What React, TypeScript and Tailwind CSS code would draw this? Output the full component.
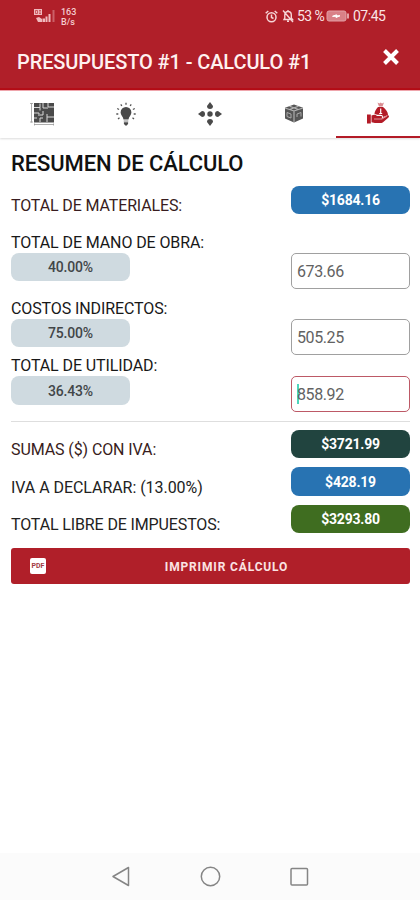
import React from 'react';
import clsx from 'clsx';

const INK = '#4a4a4a';

function PlanIcon() {
  return (
    <svg width="25" height="24" viewBox="0 0 25 24" fill={INK}>
      <path d="M4 1h20v19.500H4z" />
      <path
        d="M4 5.500h6v-4M10 5.500v3M13 1v5h5M18 1v4h6M4 11h5v3M13 9v4h-3M17 12v8M17 15h7M10 20v-4h3M4 16h3"
        fill="none"
        stroke="#d8d8d8"
        strokeWidth="1"
      />
      <path d="M1.500 1v19.500M0 1.500h3M0 20h3M4 22.500h20M4.500 21.500v2M23.500 21.500v2" fill="none" stroke="#999" strokeWidth=".8" />
    </svg>
  );
}

function BulbIcon() {
  return (
    <svg width="20" height="24" viewBox="0 0 20 24" fill={INK}>
      <path d="M10 5a5.400 5.400 0 0 0-5.400 5.400c0 2.800 2.600 4 2.900 7h5c.3-3 2.900-4.200 2.900-7A5.400 5.400 0 0 0 10 5z" />
      <path d="M7.700 18.300h4.600v1.500H7.700z" fill="#aaa" />
      <path d="M7.900 20.300h4.200v1.500L10.800 23.500H9.200l-1.300-1.700z" />
      <path
        d="M10 .8v2M4.800 2.300l1 1.700M15.200 2.300l-1 1.700M1.200 6.500l1.900 1M18.800 6.500l-1.900 1M.3 12h2M17.700 12h2M2 17l1.500-1.300M18 17l-1.500-1.300"
        fill="none"
        stroke="#555"
        strokeWidth="1.300"
      />
    </svg>
  );
}

function ArrowsIcon() {
  return (
    <svg width="24" height="24" viewBox="0 0 24 24" fill={INK}>
      <circle cx="12" cy="12" r="2.700" />
      {[0, 90, 180, 270].map((angle) => (
        <g key={angle} transform={`rotate(${angle} 12 12)`}>
          <path d="M12 0l3 4a2.800 2.800 0 1 1-6 0z" />
        </g>
      ))}
    </svg>
  );
}

function BoxIcon() {
  return (
    <svg width="20" height="19" viewBox="0 0 20 19">
      <path d="M10 .5l9 3.200v10.800l-9 4-9-4V3.700z" fill="#555" />
      <path d="M1 4l9 3 9-3M5.500 2.200l9 3.300M14.500 2.200l-9 3.300M10 7v11" fill="none" stroke="#b5b5b5" strokeWidth="1.100" />
      <path d="M3 8.500l4 1.500v4l-4-1.500zM13 13v-3l4-1.500v4" fill="none" stroke="#aaa" strokeWidth="1" />
    </svg>
  );
}

function MoneyHandIcon() {
  return (
    <svg width="23" height="23" viewBox="0 0 23 23" fill="#b31b27">
      <path d="M0 12.500h3.800v9H0z" />
      <path d="M4.500 13.500c2.500-1 4-1 5.500.5h4c1.500 0 1.500 2 0 2.200h-3.500 4.500l5-2.700c1.800-.7 2.700.8 1.500 1.900l-5.500 4.800c-1 .7-2 .9-3.500.9H8l-3.500-.8z" />
      <path d="M11 5h5c2.800 2.300 5 5 5 8l-5 2c0-1.500-1-2.200-2.500-2.200h-3L7.500 12C7.500 9 9.300 7 11 5z" />
      <path d="M10.500 .5l1.500 4h3.500l1.500-4-2 1-1.300-1-1.300 1z" fill="#d98c91" />
      <path d="M13.700 6.500v5.500M12.200 11.500h3" stroke="#fff" strokeWidth="1.200" fill="none" />
      <path d="M7 17h8l5-3" stroke="#f3c7ca" strokeWidth=".7" fill="none" />
    </svg>
  );
}

function StatusBar() {
  return (
    <div className="flex h-8 items-center pl-[34px] pr-[34px] text-[#f4cdcf]">
      <svg width="22" height="16" viewBox="0 0 22 16" fill="#f0b9bd">
        <path d="M0 1h8v6H0z" />
        <path d="M1.500 2.500h2v3h-2zM5 2.500h2M5 4h2M5 5.500h2" stroke="#b21e29" strokeWidth=".6" fill="none" />
        <path d="M2 10l3-1 3 2v3H4zM8.500 10.500h2.500V14H8.500zM11.500 8.500h2V14h-2zM14.500 6h2v8h-2z" />
        <path d="M18.500 2h2v12h-2z" fill="#cb6068" />
      </svg>
      <div className="ml-[5px] mt-[2px] w-[17px] text-[9px] font-medium leading-[10px]">
        <div>163</div>
        <div>B/s</div>
      </div>
      <div className="ml-auto flex items-center">
        <svg width="13" height="13" viewBox="0 0 13 13" fill="none" stroke="#f6d5d7" strokeWidth="1.500">
          <circle cx="6.500" cy="7.200" r="4.500" />
          <path d="M6.500 4.500v3l2 1M.7 3.300L3.300 1M12.300 3.300L9.700 1" />
        </svg>
        <svg className="ml-[4px]" width="12" height="14" viewBox="0 0 12 14" fill="none" stroke="#f6d5d7" strokeWidth="1.400">
          <path d="M2 10.500h8.500L9.300 9V6c0-2-1.300-3.500-3.300-3.500S2.800 4 2.800 6v3zM6 1v1.500M5 12.300h2M1 1.500l10 11.500" />
        </svg>
        <span className="ml-[3px] w-[28px] whitespace-nowrap pt-px text-[14px] tracking-[-0.6px] text-[#fae4e5]">53 %</span>
        <svg className="ml-px" width="24" height="12" viewBox="0 0 24 12">
          <rect x="1" y="1" width="19" height="10" rx="2" fill="#d98087" stroke="#e2a0a5" />
          <path d="M22 3.500v5" stroke="#f0c3c6" strokeWidth="1.600" />
          <path d="M6.500 6.300l4-1.500v1h3.500L10 7.500V6.300z" fill="#fff" stroke="#fff" />
        </svg>
        <span className="ml-[3px] w-[33px] whitespace-nowrap pt-px text-[14px] tracking-[-0.5px] text-[#fae4e5]">07:45</span>
      </div>
    </div>
  );
}

function Badge({ className, children }: { className: string; children: React.ReactNode }) {
  return (
    <div className={clsx('flex h-[28.5px] w-[119px] items-center justify-center rounded-[8px] pt-[1.5px] text-[14px]', className)}>
      {children}
    </div>
  );
}

function TotalRow({ label, value, color, labelClass }: { label: string; value: string; color: string; labelClass: string }) {
  return (
    <div className="flex h-[30px] items-start justify-between">
      <div className={clsx('mt-[10.5px] whitespace-nowrap text-[16px] leading-[20px]', labelClass)}>{label}</div>
      <Badge className={clsx('font-bold tracking-[-0.2px] text-white', color)}>{value}</Badge>
    </div>
  );
}

function PercentRow({
  label,
  percent,
  value,
  focused = false,
}: {
  label: string;
  percent: string;
  value: string;
  focused?: boolean;
}) {
  return (
    <div>
      <div className="h-[20px] whitespace-nowrap text-[16px] leading-[20px] tracking-[-0.1px] text-[#181818]">{label}</div>
      <div className="flex items-start justify-between">
        <Badge className="bg-[#cfdae0] font-medium tracking-[-0.2px] text-[#424648]">{percent}</Badge>
        <div
          className={clsx(
            'flex h-[36px] w-[119px] items-center rounded-[5px] border pl-[5px] pt-[2px] text-[16px] tracking-[-0.4px] text-[#626262]',
            focused ? 'border-[#bd5966]' : 'border-[#a0a0a0]',
          )}
        >
          {focused && <span className="-mr-[2px] mb-[2px] h-[20px] w-[2px] bg-[#50d5bc]" />}
          {value}
        </div>
      </div>
    </div>
  );
}

export default function App() {
  const tabs = [
    { name: 'plano', icon: <PlanIcon /> },
    { name: 'luz', icon: <BulbIcon /> },
    { name: 'mover', icon: <ArrowsIcon /> },
    { name: 'materiales', icon: <BoxIcon /> },
    { name: 'costos', icon: <MoneyHandIcon />, active: true },
  ];

  return (
    <div className="flex h-[900px] w-[420px] flex-col overflow-hidden bg-white font-['Roboto',sans-serif] text-[#222]">
      <header className="h-[90px] border-b-2 border-[#b40d17] bg-[#b01f29]">
        <StatusBar />
        <div className="flex h-[56px] items-center justify-between pl-[17px] pr-[20px]">
          <h1 className="mt-[4px] whitespace-nowrap text-[20px] font-medium tracking-[-0.1px] text-[#fff1f0]">
            PRESUPUESTO #1 - CALCULO #1
          </h1>
          <svg className="-mt-[6px]" width="18" height="18" viewBox="0 0 18 18" stroke="#fff" strokeWidth="4">
            <path d="M2.500 2.500l13 13M15.500 2.500l-13 13" />
          </svg>
        </div>
      </header>

      <nav className="grid h-[48px] grid-cols-5 border-t border-[#efa5ac] shadow-[0_1px_2px_rgba(0,0,0,0.14)]">
        {tabs.map((tab) => (
          <div
            key={tab.name}
            className={clsx('flex items-center justify-center border-b-2', tab.active ? 'border-[#b31b27]' : 'border-transparent')}
          >
            {tab.icon}
          </div>
        ))}
      </nav>

      <main className="flex flex-1 flex-col pl-[11px] pr-[10px]">
        <h2 className="mt-[13px] h-[26px] whitespace-nowrap text-[22px] font-medium leading-[26px] tracking-[-0.1px] text-[#111]">
          RESUMEN DE CÁLCULO
        </h2>

        <div className="mt-[8.5px]">
          <TotalRow
            label="TOTAL DE MATERIALES:"
            value="$1684.16"
            color="bg-[#2873b2]"
            labelClass="text-[#381c20] tracking-[-0.13px]"
          />
        </div>

        <div className="mt-[17px] flex flex-col">
          <PercentRow label="TOTAL DE MANO DE OBRA:" percent="40.00%" value="673.66" />
          <div className="mb-[1.5px] mt-[10px]">
            <PercentRow label="COSTOS INDIRECTOS:" percent="75.00%" value="505.25" />
          </div>
          <PercentRow label="TOTAL DE UTILIDAD:" percent="36.43%" value="858.92" focused />
        </div>

        <div className="mt-[9px] h-px bg-[#dedede]" />

        <div className="mt-[7.5px] flex flex-col gap-[7.5px]">
          <TotalRow label="SUMAS ($) CON IVA:" value="$3721.99" color="bg-[#21443f]" labelClass="text-[#381c20] tracking-[-0.1px]" />
          <TotalRow label="IVA A DECLARAR: (13.00%)" value="$428.19" color="bg-[#2873b2]" labelClass="tracking-[-0.05px]" />
          <TotalRow label="TOTAL LIBRE DE IMPUESTOS:" value="$3293.80" color="bg-[#3f6d20]" labelClass="tracking-[-0.13px]" />
        </div>

        <button className="mt-[13.5px] flex h-[36px] items-center rounded-[3px] bg-[#b01f29] pl-[19px] text-[12px] font-bold text-[#fbe3e3]">
          <span className="flex h-[16px] w-[16px] items-center justify-center rounded-[2px] bg-white text-[7px] text-[#a23a42]">
            PDF
          </span>
          <span className="flex-1 pr-[3px] pt-[1px] text-center tracking-[0.85px]">IMPRIMIR CÁLCULO</span>
        </button>
      </main>

      <footer className="h-[47px] bg-[#fbfbfb]">
        <svg className="mx-auto" width="198" height="47" viewBox="0 0 198 47" fill="none" stroke="#858585" strokeWidth="1.500" strokeLinejoin="round">
          <path d="M2 23.500l15.500-9v18z" />
          <circle cx="99.500" cy="23.500" r="9.200" />
          <rect x="180" y="15.500" width="16.500" height="16.500" rx="1" />
        </svg>
      </footer>
    </div>
  );
}
